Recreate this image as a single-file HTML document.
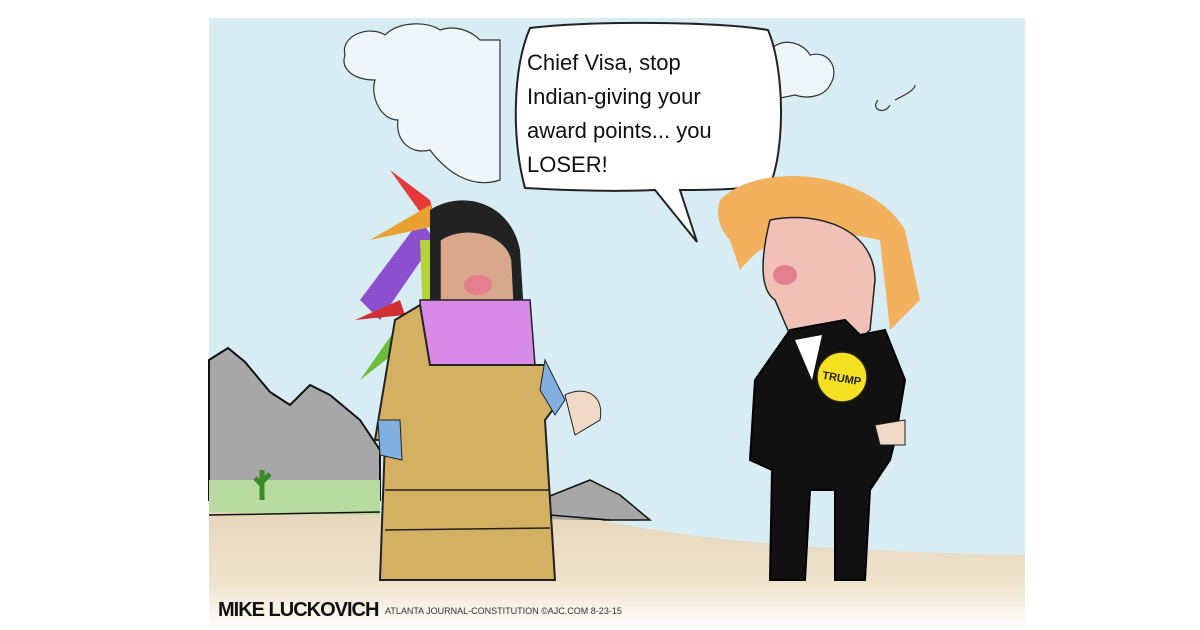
<!DOCTYPE html>
<html><head><meta charset="utf-8"><style>
html,body{margin:0;padding:0;background:#fff;width:1200px;height:630px;overflow:hidden}
</style></head><body>
<svg width="1200" height="630" viewBox="0 0 1200 630" xmlns="http://www.w3.org/2000/svg">
<defs>
<linearGradient id="sand" x1="0" y1="0" x2="0" y2="1">
<stop offset="0" stop-color="#e6d6bb"/><stop offset="0.6" stop-color="#efe3cd"/><stop offset="1" stop-color="#ffffff"/>
</linearGradient>
</defs>
<rect x="209" y="18" width="816" height="600" fill="#d8ecf4"/>
<path d="M345,55 C340,35 370,25 385,35 C400,20 430,22 440,30 C455,25 470,30 480,40 L500,40 L500,180 C470,190 445,170 430,150 C410,155 395,140 398,120 C380,120 370,95 375,80 C355,80 340,70 345,55Z" fill="#eef6f9" stroke="#333" stroke-width="1.2"/>
<path d="M770,50 C785,35 805,45 810,55 C830,50 840,70 830,85 C825,95 810,100 795,95 L770,100Z" fill="#eef6f9" stroke="#333" stroke-width="1.2"/>
<path d="M878,100 C870,110 885,115 890,105 M895,100 C905,95 915,90 915,85" fill="none" stroke="#333" stroke-width="1.2"/>
<path d="M209,360 L228,348 L245,362 L270,392 L290,405 L310,385 L330,395 L360,420 L380,450 L380,500 L209,500Z" fill="#a6a7a6" stroke="#111" stroke-width="2"/>
<path d="M540,500 L590,480 L620,495 L650,520 L540,520Z" fill="#a6a7a6" stroke="#111" stroke-width="1.5"/>
<path d="M209,480 L380,480 L380,515 L209,515Z" fill="#b8dca0"/>
<path d="M209,512 L600,520 C700,540 800,550 1025,555 L1025,630 L209,630Z" fill="url(#sand)"/>
<path d="M209,515 L380,512 M550,515 L610,520" stroke="#111" stroke-width="1.5"/>
<path d="M262,470 L262,500 M262,485 L255,478 M262,482 L270,474" stroke="#3a8a2a" stroke-width="5"/>
<path d="M530,28 C600,20 720,22 768,30 C785,70 785,150 770,185 C740,190 700,190 680,190 L697,242 L655,190 C610,192 560,190 525,188 C512,140 512,70 530,28Z" fill="#fff" stroke="#222" stroke-width="2"/>
<text font-family="'Liberation Sans',sans-serif" font-size="22" fill="#111">
<tspan x="527" y="70">Chief Visa, stop</tspan>
<tspan x="527" y="104">Indian-giving your</tspan>
<tspan x="527" y="138">award points... you</tspan>
<tspan x="527" y="172">LOSER!</tspan>
</text>
<path d="M390,170 L440,240 L430,200Z" fill="#e63a3a"/>
<path d="M360,300 L420,220 L435,240 L380,320Z" fill="#8b4fd0"/>
<path d="M370,240 L430,205 L440,225 Z" fill="#e8a030"/>
<path d="M355,320 L400,300 L405,315Z" fill="#d03030"/>
<path d="M360,380 L395,330 L405,345Z" fill="#6dbd3a"/>
<path d="M420,240 L425,380 L450,380 L435,240Z" fill="#b5d23a"/>
<path d="M430,210 C460,190 510,200 520,250 L525,330 L430,330Z" fill="#222"/>
<path d="M440,240 C460,225 505,230 512,260 L515,320 C500,350 470,350 450,330 L440,300Z" fill="#d9a88c" stroke="#222" stroke-width="1.5"/>
<ellipse cx="478" cy="285" rx="14" ry="10" fill="#e57f90"/>
<path d="M420,300 L530,300 L535,365 L425,365Z" fill="#d88be6" stroke="#222" stroke-width="1.5"/>
<path d="M395,320 L420,305 L430,365 L545,365 L560,400 L545,420 L555,580 L380,580 L385,440 L375,440Z" fill="#d4b062" stroke="#222" stroke-width="2"/>
<path d="M378,420 L400,420 L402,460 L380,455Z" fill="#7fb0e0" stroke="#222"/>
<path d="M545,360 L565,400 L555,415 L540,390Z" fill="#7fb0e0" stroke="#222"/>
<path d="M565,395 C585,385 605,395 600,420 L575,435 Z" fill="#f0d9c6" stroke="#222"/>
<path d="M385,490 L550,490 M385,530 L550,528" stroke="#222" stroke-width="1.5"/>
<path d="M720,200 C760,160 870,170 905,230 L920,300 L890,330 L880,240 C830,230 780,220 740,270 L730,240 C720,230 715,215 720,200Z" fill="#f3b15e"/>
<path d="M770,220 C820,210 875,230 875,280 L870,330 C850,350 810,350 790,335 L775,300 C760,290 760,260 770,220Z" fill="#f1c1b7" stroke="#222" stroke-width="1.5"/>
<ellipse cx="785" cy="275" rx="12" ry="10" fill="#e57f90"/>
<path d="M790,330 L845,320 L860,335 L885,330 L905,380 L895,440 L890,460 L870,490 L865,580 L835,580 L835,490 L810,490 L805,580 L770,580 L772,470 L750,460 L755,380 Z" fill="#111" stroke="#000" stroke-width="2"/>
<path d="M795,340 L822,335 L812,380Z" fill="#fff"/>
<circle cx="842" cy="377" r="25" fill="#f6e022" stroke="#222" stroke-width="1.5"/>
<text x="842" y="382" text-anchor="middle" font-family="'Liberation Sans',sans-serif" font-size="11" font-weight="bold" fill="#222" transform="rotate(10 842 377)">TRUMP</text>
<path d="M875,425 L905,420 L905,445 L880,445Z" fill="#f0d9c6" stroke="#222"/>
<text x="218" y="616" font-family="'Liberation Sans',sans-serif" font-size="20" font-weight="bold" fill="#111" letter-spacing="-1">MIKE LUCKOVICH</text>
<text x="385" y="614" font-family="'Liberation Sans',sans-serif" font-size="9" fill="#333">ATLANTA JOURNAL-CONSTITUTION ©AJC.COM 8-23-15</text>
</svg>
</body></html>
